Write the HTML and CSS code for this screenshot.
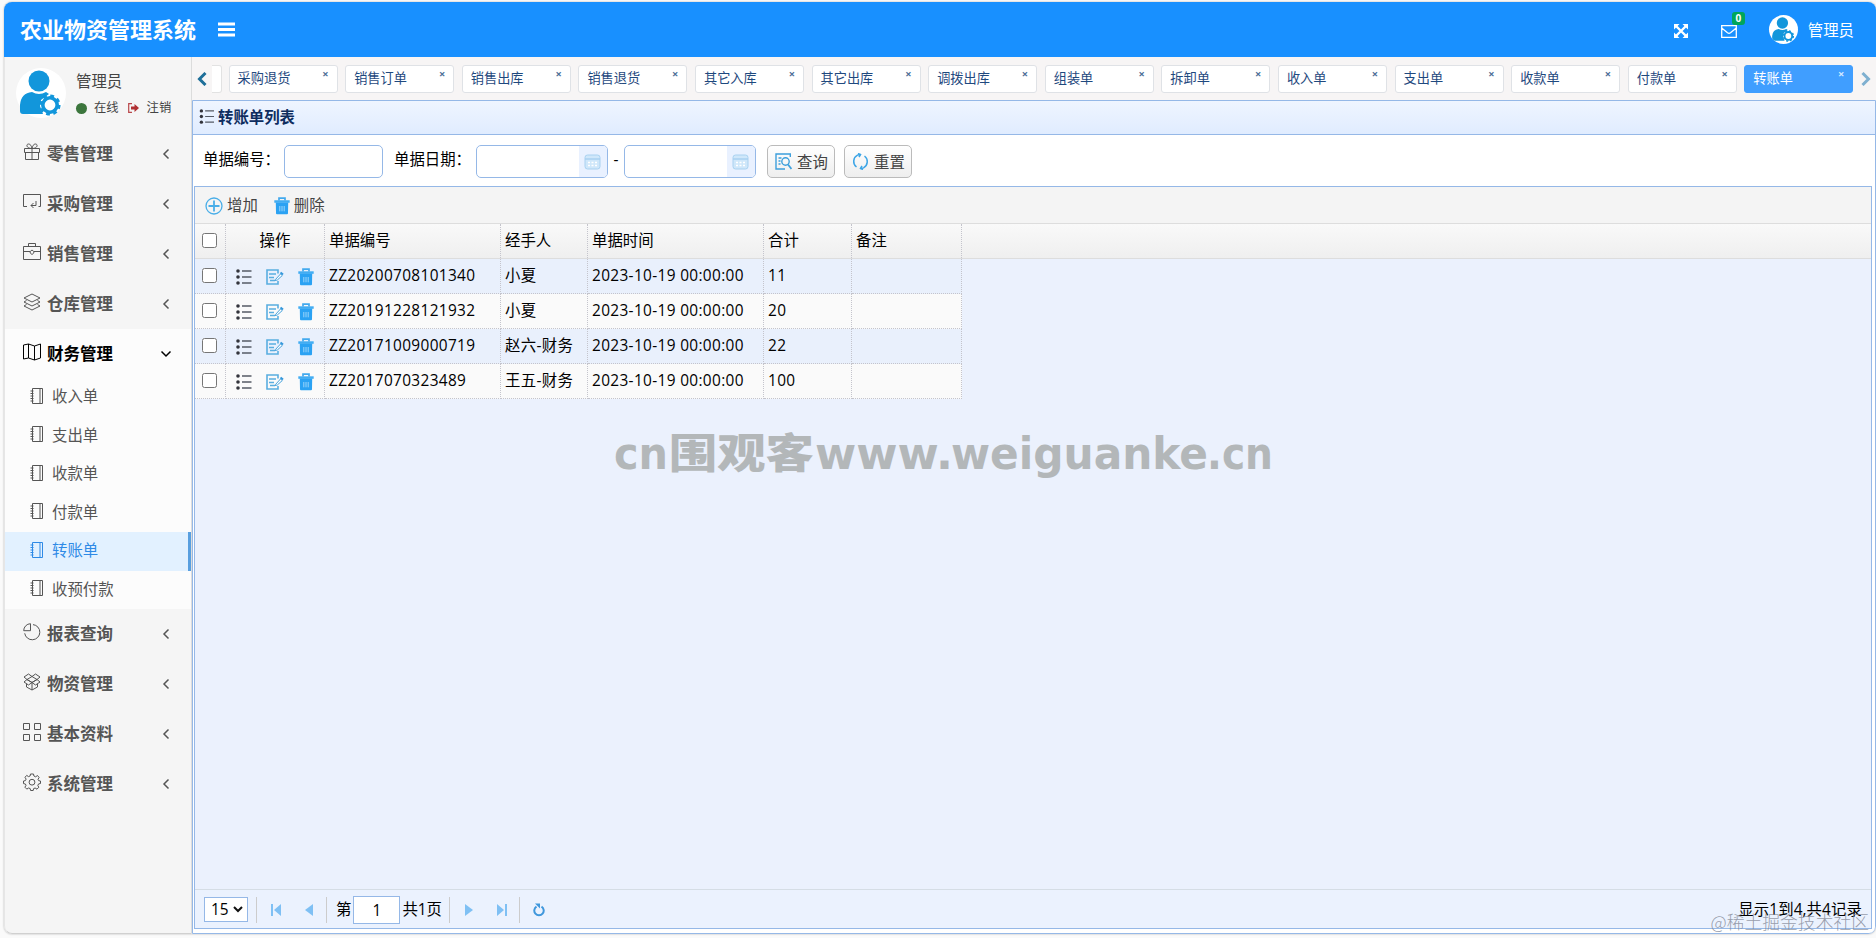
FILE: index.html
```html
<!DOCTYPE html>
<html lang="zh-CN">
<head>
    <meta charset="UTF-8">
    <title>农业物资管理系统</title>
    <link rel="stylesheet" href="styles.css">
</head>
<body>
    <!-- Icon definitions -->
    <svg class="icon-defs" width="0" height="0">
        <symbol id="i-user" viewBox="0 0 50 50">
            <circle cx="23" cy="13" r="10.5" fill="#1296db"/>
            <path d="M4 43V37Q5 25 16 24Q23 28 30 24L33 26L25 32L24 38L27 46H7Q4 46 4 43Z" fill="#1296db"/>
            <circle cx="34" cy="37" r="7.2" fill="#fff" stroke="#1296db" stroke-width="3.6"/>
            <circle cx="34" cy="37" r="9.3" fill="none" stroke="#1296db" stroke-width="2.6" stroke-dasharray="3.8 3.5"/>
        </symbol>
        <symbol id="i-gift" viewBox="0 0 18 18"><path d="M1.5 5.5h15v4h-15zM2.5 9.5v7h13v-7M9 5.5v11M9 5.500C3 5.500 3 1 5.500 1C7.500 1 8.500 3 9 5.500C9.500 3 10.500 1 12.500 1C15 1 15 5.500 9 5.500"/></symbol>
        <symbol id="i-purchase" viewBox="0 0 18 18"><path d="M4 13.500H.5V1.500h17v12h-2M13 8v4.500H8M10.500 10L8 12.500L10.500 15"/></symbol>
        <symbol id="i-case" viewBox="0 0 18 18"><path d="M.5 3.500h17v13H.5zM5.500 3.500v-3h7v3M.5 8.500h6.500M11 8.500h6.500M9 7l1.800 1.500v1.500L9 11.500L7.200 10V8.500z"/></symbol>
        <symbol id="i-layers" viewBox="0 0 18 18"><path d="M9 1l8 4-8 4-8-4zM3.500 7.500L1 9l8 4 8-4-2.500-1.500M3.500 11.500L1 13l8 4 8-4-2.500-1.500"/></symbol>
        <symbol id="i-map" viewBox="0 0 18 18"><path d="M.5 2l5-1 6 2 6-2v14l-6 2-6-2-5 1zM5.500 1v14M11.500 3v14"/></symbol>
        <symbol id="i-book" viewBox="0 0 14 16"><path d="M2.500.5h10v15h-10zM10 .5v15M.5 3h3M.5 5.500h3M.5 8h3M.5 10.500h3M.5 13h3"/></symbol>
        <symbol id="i-pie" viewBox="0 0 18 18"><path d="M7.500.7v7H.7A7 7 0 0 1 7.500.7zM10 1.600a7.600 7.600 0 1 1-8.300 8.700"/></symbol>
        <symbol id="i-box" viewBox="0 0 18 18"><path d="M5.500 1L1 4l3 2.500L9 3.500zM12.500 1L17 4l-3 2.500L9 3.500zM4 6.500L1 9l4.500 3L9 9.500zM14 6.500L17 9l-4.500 3L9 9.500zM4 6.500l5 3 5-3M3.500 11v3L9 17l5.500-3v-3M9 9.500V17"/></symbol>
        <symbol id="i-grid" viewBox="0 0 18 18"><path d="M.5.5h6v6h-6zM11.500.5h6v6h-6zM.5 11.500h6v6h-6zM11.500 11.500h6v6h-6z"/></symbol>
        <symbol id="i-gear" viewBox="0 0 18 18"><path d="M7.500 1h3l.4 2 1.700.8L14.500 2.500l1.600 2L15 6.300l.7 1.400 1.800.3v2.500l-1.900.4-.8 1.600 1 1.700-1.800 2-1.900-1.200-1.500.6-.4 1.900H7.600l-.4-1.900-1.600-.6-1.800 1.100-1.900-1.900 1.100-1.800L2.400 11 .5 10.600V8l1.900-.4.7-1.500L2 4.300l1.700-1.900 1.800 1.200L7.100 3z"/><circle cx="9" cy="9.200" r="2.900"/></symbol>
        <symbol id="i-left" viewBox="0 0 8 12"><path d="M6.500 1.500L2 6l4.500 4.500"/></symbol>
        <symbol id="i-down" viewBox="0 0 12 8"><path d="M1.500 1.500L6 6l4.500-4.500"/></symbol>
        <symbol id="i-list" viewBox="0 0 16 16"><path d="M6 2h9.500M6 8h9.500M6 14h9.500" stroke="#555b66" stroke-width="1.300"/><g fill="#33343c"><circle cx="2" cy="2" r="1.800"/><circle cx="2" cy="8" r="1.800"/><circle cx="2" cy="14" r="1.800"/></g></symbol>
        <symbol id="i-edit" viewBox="0 0 18 16"><path d="M12 4.500V1H1v14h11v-3M3 5h7M3 8.500h5M9 11.500H4" stroke="#5aaee0" fill="none" stroke-width="1.600"/><path d="M9.500 10.500l5-5.500 1.800 1.500-5 4.500-2.300.5z" fill="#fff" stroke="#48a3dc"/><path d="M14.500 3.500l2.500 2" stroke="#3498db" stroke-width="2"/></symbol>
        <symbol id="i-trash" viewBox="0 0 16 18"><path d="M5 3.500V1.200h6v2.300" fill="none" stroke="#42a9ee" stroke-width="1.700"/><path d="M.3 3.300h15.400v2.500H.3z" fill="#42adf2"/><path d="M1.800 5.500h12.400L14 16.200q0 1-1 1H3q-1 0-1-1z" fill="#2ba2f3"/><path d="M5.800 9v5.300M8 9v5.300M10.200 9v5.300" stroke="#9bd5fb" stroke-width="1"/></symbol>
        <symbol id="i-cal" viewBox="0 0 17 16"><rect x="1" y="1" width="15" height="14" rx="2.500" fill="#cfe7fa" stroke="#a9d1f0"/><path d="M1 5h15" stroke="#a9d1f0" stroke-width="1.500"/><path d="M4 8.500h9M4 11.500h9" stroke="#fff" stroke-width="1.500" stroke-dasharray="2 1.500"/></symbol>
    </svg>

    <div class="app">
        <div class="header">
            <h1>农业物资管理系统</h1>
            <svg class="burger" width="17" height="15" viewBox="0 0 17 15"><path d="M0 2h17M0 7.500h17M0 13h17" stroke="#fff" stroke-width="3"/></svg>
            <div class="header-right">
                <svg class="expand" width="14" height="14" viewBox="0 0 14 14"><path d="M0 0h5.500L0 5.500zM14 0v5.500L8.500 0zM0 14V8.500L5.500 14zM14 14H8.500L14 8.500z" fill="#fff"/><path d="M2 2l10 10M12 2L2 12" stroke="#fff" stroke-width="2.400"/></svg>
                <div class="mail">
                    <svg width="16" height="13" viewBox="0 0 16 13"><path d="M.7.700h14.600v11.600H.700zM.700 3l5.800 4.800q1.500 1 3 0L15.300 3" fill="none" stroke="#fff" stroke-width="1.300"/></svg>
                    <span class="badge">0</span>
                </div>
                <span class="avatar"><svg width="27" height="27"><use href="#i-user"/></svg></span>
                <span class="user-name">管理员</span>
            </div>
        </div>

        <div class="body">
            <!-- Sidebar -->
            <div class="sidebar">
                <div class="user-panel">
                    <span class="photo"><svg width="50" height="50"><use href="#i-user"/></svg></span>
                    <div class="user-info">
                        <div class="user-title">管理员</div>
                        <div class="user-status">
                            <span class="dot"></span><span>在线</span>
                            <svg width="11" height="10" viewBox="0 0 11 10"><path d="M4 .7H.7v8.600H4" fill="none" stroke="#b9474a" stroke-width="1.200"/><path d="M3 3.500h3.500V1L11 5 6.500 9V6.500H3z" fill="#b03033"/></svg>
                            <span>注销</span>
                        </div>
                    </div>
                </div>
                <div class="menu">
                    <div class="menu-item"><svg class="line"><use href="#i-gift"/></svg><span>零售管理</span><svg class="arrow"><use href="#i-left"/></svg></div>
                    <div class="menu-item"><svg class="line"><use href="#i-purchase"/></svg><span>采购管理</span><svg class="arrow"><use href="#i-left"/></svg></div>
                    <div class="menu-item"><svg class="line"><use href="#i-case"/></svg><span>销售管理</span><svg class="arrow"><use href="#i-left"/></svg></div>
                    <div class="menu-item"><svg class="line"><use href="#i-layers"/></svg><span>仓库管理</span><svg class="arrow"><use href="#i-left"/></svg></div>
                    <div class="menu-item open"><svg class="line"><use href="#i-map"/></svg><span>财务管理</span><svg class="arrow"><use href="#i-down"/></svg></div>
                    <div class="submenu">
                        <div class="sub-item"><svg class="line"><use href="#i-book"/></svg><span>收入单</span></div>
                        <div class="sub-item"><svg class="line"><use href="#i-book"/></svg><span>支出单</span></div>
                        <div class="sub-item"><svg class="line"><use href="#i-book"/></svg><span>收款单</span></div>
                        <div class="sub-item"><svg class="line"><use href="#i-book"/></svg><span>付款单</span></div>
                        <div class="sub-item active"><svg class="line"><use href="#i-book"/></svg><span>转账单</span></div>
                        <div class="sub-item"><svg class="line"><use href="#i-book"/></svg><span>收预付款</span></div>
                    </div>
                    <div class="menu-item"><svg class="line"><use href="#i-pie"/></svg><span>报表查询</span><svg class="arrow"><use href="#i-left"/></svg></div>
                    <div class="menu-item"><svg class="line"><use href="#i-box"/></svg><span>物资管理</span><svg class="arrow"><use href="#i-left"/></svg></div>
                    <div class="menu-item"><svg class="line"><use href="#i-grid"/></svg><span>基本资料</span><svg class="arrow"><use href="#i-left"/></svg></div>
                    <div class="menu-item"><svg class="line"><use href="#i-gear"/></svg><span>系统管理</span><svg class="arrow"><use href="#i-left"/></svg></div>
                </div>
            </div>

            <div class="main">
                <!-- Page tabs -->
                <div class="tabs">
                    <div class="tab-prev"><svg width="10" height="14" viewBox="0 0 10 14"><path d="M8.500 1L2.500 7l6 6" fill="none" stroke="#1f6f99" stroke-width="3"/></svg></div>
                    <div class="tab-cut"></div>
                    <div class="tab">采购退货<i>×</i></div>
                    <div class="tab">销售订单<i>×</i></div>
                    <div class="tab">销售出库<i>×</i></div>
                    <div class="tab">销售退货<i>×</i></div>
                    <div class="tab">其它入库<i>×</i></div>
                    <div class="tab">其它出库<i>×</i></div>
                    <div class="tab">调拨出库<i>×</i></div>
                    <div class="tab">组装单<i>×</i></div>
                    <div class="tab">拆卸单<i>×</i></div>
                    <div class="tab">收入单<i>×</i></div>
                    <div class="tab">支出单<i>×</i></div>
                    <div class="tab">收款单<i>×</i></div>
                    <div class="tab">付款单<i>×</i></div>
                    <div class="tab active">转账单<i>×</i></div>
                    <div class="tab-next"><svg width="10" height="14" viewBox="0 0 10 14"><path d="M1.500 1l6 6-6 6" fill="none" stroke="#7fb0d0" stroke-width="3"/></svg></div>
                </div>

                <div class="panel">
                    <div class="panel-title"><svg width="16" height="15"><use href="#i-list"/></svg><span>转账单列表</span></div>
                    <div class="search">
                        <label class="label-no">单据编号：</label>
                        <div class="field field-no"></div>
                        <label class="label-date">单据日期：</label>
                        <div class="field field-date"><span><svg width="17" height="16"><use href="#i-cal"/></svg></span></div>
                        <span class="dash">-</span>
                        <div class="field field-date"><span><svg width="17" height="16"><use href="#i-cal"/></svg></span></div>
                        <button class="btn btn-search"><svg width="17" height="17" viewBox="0 0 17 17" fill="none" stroke="#3d9fdc" stroke-width="1.400"><path d="M15.300 4V1H1v15h9M3.500 5h3M3.500 8h2M3.500 11h2M1 1v15"/><circle cx="10.500" cy="8.500" r="3.700"/><path d="M13 11.500l3.500 4.500" stroke-width="1.800"/></svg>查询</button>
                        <button class="btn"><svg width="17" height="17" viewBox="0 0 17 17" fill="none" stroke="#3da5e6" stroke-width="1.500"><path d="M5.500 2.200a7 7 0 0 0-1 11.800M11.500 14.800a7 7 0 0 0 1-11.800M8.500 1.500a7 7 0 0 0-3 .7M8.500 15.500a7 7 0 0 0 3-.7"/><path d="M6 .5l2.500 1L7 4M11 16.500l-2.500-1L10 13"/></svg>重置</button>
                    </div>

                    <div class="datagrid">
                        <div class="toolbar">
                            <svg width="18" height="18" viewBox="0 0 18 18" fill="none" stroke="#4aaee8" stroke-width="1.300"><circle cx="9" cy="9" r="8"/><path d="M9 3.500v11M3.500 9h11" stroke-width="1.800"/></svg><span class="add">增加</span>
                            <svg width="16" height="18"><use href="#i-trash"/></svg><span>删除</span>
                        </div>
                        <div class="row head">
                            <div><input type="checkbox"></div>
                            <div class="ops-title">操作</div>
                            <div>单据编号</div>
                            <div>经手人</div>
                            <div>单据时间</div>
                            <div>合计</div>
                            <div>备注</div>
                        </div>
                        <div class="row blue">
                            <div><input type="checkbox"></div>
                            <div class="ops"><svg width="16" height="16"><use href="#i-list"/></svg><svg width="18" height="16"><use href="#i-edit"/></svg><svg width="16" height="18"><use href="#i-trash"/></svg></div>
                            <div>ZZ20200708101340</div>
                            <div>小夏</div>
                            <div>2023-10-19 00:00:00</div>
                            <div>11</div>
                            <div></div>
                        </div>
                        <div class="row">
                            <div><input type="checkbox"></div>
                            <div class="ops"><svg width="16" height="16"><use href="#i-list"/></svg><svg width="18" height="16"><use href="#i-edit"/></svg><svg width="16" height="18"><use href="#i-trash"/></svg></div>
                            <div>ZZ20191228121932</div>
                            <div>小夏</div>
                            <div>2023-10-19 00:00:00</div>
                            <div>20</div>
                            <div></div>
                        </div>
                        <div class="row blue">
                            <div><input type="checkbox"></div>
                            <div class="ops"><svg width="16" height="16"><use href="#i-list"/></svg><svg width="18" height="16"><use href="#i-edit"/></svg><svg width="16" height="18"><use href="#i-trash"/></svg></div>
                            <div>ZZ20171009000719</div>
                            <div>赵六-财务</div>
                            <div>2023-10-19 00:00:00</div>
                            <div>22</div>
                            <div></div>
                        </div>
                        <div class="row">
                            <div><input type="checkbox"></div>
                            <div class="ops"><svg width="16" height="16"><use href="#i-list"/></svg><svg width="18" height="16"><use href="#i-edit"/></svg><svg width="16" height="18"><use href="#i-trash"/></svg></div>
                            <div>ZZ2017070323489</div>
                            <div>王五-财务</div>
                            <div>2023-10-19 00:00:00</div>
                            <div>100</div>
                            <div></div>
                        </div>
                        <div class="grid-space"></div>
                        <!-- Pager -->
                        <div class="pager">
                            <div class="page-size">15<svg width="10" height="7" viewBox="0 0 10 7"><path d="M1 1l4 4 4-4" fill="none" stroke="#111" stroke-width="2"/></svg></div>
                            <span class="sep"></span>
                            <svg class="first" width="10" height="12" viewBox="0 0 10 12"><path d="M0 0h2v12H0zM10 0v12L3 6z" fill="#7fc0f4"/></svg>
                            <svg class="prev" width="8" height="12" viewBox="0 0 8 12"><path d="M8 0v12L0 6z" fill="#7fc0f4"/></svg>
                            <span class="sep"></span>
                            <span class="page-text">第</span>
                            <div class="page-no">1</div>
                            <span>共1页</span>
                            <span class="sep sep-total"></span>
                            <svg class="next" width="8" height="12" viewBox="0 0 8 12"><path d="M0 0l8 6-8 6z" fill="#7fc0f4"/></svg>
                            <svg class="last" width="10" height="12" viewBox="0 0 10 12"><path d="M8 0h2v12H8zM0 0l7 6-7 6z" fill="#7fc0f4"/></svg>
                            <span class="sep"></span>
                            <svg class="reload" width="12" height="14" viewBox="0 0 12 14"><path d="M8.500 3.600a4.700 4.700 0 1 1-5 0" fill="none" stroke="#3f97dc" stroke-width="2"/><path d="M2 .5h5v5z" fill="#3f97dc"/></svg>
                            <span class="total">显示1到4,共4记录</span>
                        </div>
                    </div>
                </div>
            </div>
        </div>
    </div>

    <svg class="site-mark" width="680" height="70">
        <text x="9" y="44" font-size="45" textLength="54" lengthAdjust="spacingAndGlyphs">cn</text>
        <text class="cjk" x="-1" y="43" font-size="41" transform="translate(65 0) scale(1.180 1)">围观客</text>
        <text x="210" y="44" font-size="45" textLength="138" lengthAdjust="spacingAndGlyphs">www.</text>
        <text x="346" y="44" font-size="45" textLength="257" lengthAdjust="spacingAndGlyphs">weiguanke</text>
        <text x="602" y="44" font-size="45" textLength="66" lengthAdjust="spacingAndGlyphs">.cn</text>
    </svg>
    <div class="corner-mark">@稀土掘金技术社区</div>
</body>
</html>
```

FILE: styles.css
```css
* {
    box-sizing: border-box;
}

body {
    margin: 0;
    height: 938px;
    padding: 2px 0 4px 4px;
    overflow: hidden;
    position: relative;
    background-color: #fafafa;
    font-family: "Open Sans", "Noto Sans CJK SC", sans-serif;
    font-size: 15.4px;
    line-height: 20px;
    color: #000;
}

svg {
    display: block;
    flex: none;
}

.icon-defs {
    position: absolute;
}

.app {
    height: 932px;
    display: flex;
    flex-direction: column;
    border-radius: 8px;
    overflow: hidden;
    background-color: #f5f5f5;
    box-shadow: 0 0 2px #aaa;
}

/* Header */
.header {
    height: 55px;
    flex: none;
    display: flex;
    align-items: center;
    padding: 0 22px 0 16px;
    background-color: #1890ff;
    color: #fff;
}

.header h1 {
    margin: -2px 22px 0 0;
    font-size: 22px;
    line-height: 28px;
    font-weight: bold;
    white-space: nowrap;
}

.header-right {
    margin-left: auto;
    display: flex;
    align-items: center;
}

.expand {
    margin-top: 2px;
}

.mail {
    position: relative;
    margin: 3px 32px 0 33px;
}

.badge {
    position: absolute;
    left: 11px;
    top: -13px;
    width: 13px;
    height: 13px;
    border-radius: 3px;
    background-color: #00a65a;
    font-size: 10px;
    line-height: 12px;
    font-weight: bold;
    text-align: center;
}

.avatar {
    width: 29px;
    height: 29px;
    padding: 1px;
    border-radius: 50%;
    background-color: #fff;
    margin-right: 10px;
    overflow: hidden;
}

.user-name {
    margin-top: 2px;
}

.body {
    flex: 1;
    display: flex;
    min-height: 0;
}

/* Sidebar */
.sidebar {
    width: 188px;
    flex: none;
    border-left: 1px solid #e6e6e6;
    border-right: 1px solid #dcdcdc;
    border-bottom: 1px solid #d0d0d0;
    border-radius: 0 0 0 8px;
    background-color: #f5f5f5;
    color: #555;
}

.user-panel {
    height: 72px;
    display: flex;
    padding: 11px 0 0 11px;
}

.photo {
    width: 50px;
    height: 50px;
    border-radius: 50%;
    background-color: #fff;
}

.user-info {
    margin-left: 10px;
    color: #444;
}

.user-title {
    margin-top: 4px;
}

.user-status {
    display: flex;
    align-items: center;
    margin-top: 6px;
    font-size: 12.3px;
    white-space: nowrap;
}

.user-status svg {
    margin: 0 8px 0 9px;
}

.dot {
    width: 11px;
    height: 11px;
    border-radius: 50%;
    background-color: #3c763d;
    margin-right: 7px;
}

.line,
.arrow {
    fill: none;
    stroke: currentColor;
    stroke-width: 1;
}

.menu-item {
    height: 50px;
    display: flex;
    align-items: center;
    padding: 0 21px 0 18px;
    font-size: 16.5px;
    font-weight: bold;
}

.menu-item .line {
    width: 18px;
    height: 18px;
    margin: -4px 6px 0 0;
}

.menu-item .arrow {
    width: 8px;
    height: 12px;
    margin-left: auto;
    stroke-width: 1.5;
}

.menu-item.open {
    height: 49px;
    padding-right: 19px;
    background-color: #fcfcfc;
    color: #000;
}

.menu-item.open .arrow {
    width: 12px;
    height: 8px;
}

.submenu {
    background-color: #fcfcfc;
}

.sub-item {
    height: 38.5px;
    display: flex;
    align-items: center;
    padding-left: 25px;
}

.sub-item .line {
    width: 14px;
    height: 16px;
    margin: -3px 8px 0 0;
}

.sub-item.active {
    background-color: #e2f1ff;
    border-right: 3px solid #589fdf;
    color: #2e8ae6;
}

.main {
    flex: 1;
    min-width: 0;
    display: flex;
    flex-direction: column;
}

/* Tabs */
.tabs {
    height: 43px;
    flex: none;
    display: flex;
    align-items: center;
    background-color: #f7f5f5;
}

.tab-prev {
    width: 20px;
    padding-left: 5px;
}

.tab-cut {
    width: 10px;
    height: 28px;
    margin-right: 6.6px;
    border: 1px solid #e2e2e2;
    border-left: none;
    border-radius: 0 3px 3px 0;
    background-color: #fff;
}

.tab {
    position: relative;
    width: 109px;
    height: 28px;
    flex: none;
    margin-right: 7.6px;
    padding-left: 8px;
    border: 1px solid #dfe2e6;
    border-radius: 3px;
    background-color: #fff;
    color: #1f497e;
    font-size: 13.2px;
    line-height: 25px;
}

.tab i {
    position: absolute;
    right: 8px;
    top: 0;
    font-style: normal;
    font-size: 11px;
    font-weight: bold;
    line-height: 16px;
    color: #4b6d96;
}

.tab.active {
    border-color: #409eff;
    background-color: #409eff;
    color: #fff;
}

.tab.active i {
    color: #d4e9ff;
}

/* Panel */
.panel {
    flex: 1;
    display: flex;
    flex-direction: column;
    border: 1px solid #95b8e7;
    border-radius: 0 0 7px 0;
    background-color: #fff;
}

.panel-title {
    height: 34px;
    flex: none;
    display: flex;
    align-items: center;
    padding: 1px 0 0 6px;
    border-bottom: 1px solid #95b8e7;
    background: linear-gradient(#eff5ff, #e0ecff);
    color: #0e2d5f;
    font-weight: bold;
}

.panel-title svg {
    margin: -4px 3px 0 0;
}

.search {
    height: 51px;
    flex: none;
    display: flex;
    align-items: center;
    padding: 2px 0 0 10px;
}

.search label {
    margin-top: -3px;
    white-space: nowrap;
}

.label-no {
    width: 81px;
}

.label-date {
    width: 82px;
    margin-left: 11px;
}

.field {
    height: 33px;
    border: 1px solid #95b8e7;
    border-radius: 5px;
    overflow: hidden;
    background-color: #fff;
}

.field-no {
    width: 99px;
}

.field-date {
    width: 132px;
    display: flex;
    justify-content: flex-end;
}

.field-date span {
    width: 28px;
    padding: 8px 0 0 5px;
    background-color: #e9f1ff;
}

.dash {
    width: 16px;
    text-align: center;
    margin-top: -4px;
}

.btn {
    width: 68px;
    height: 33px;
    display: flex;
    align-items: center;
    gap: 5px;
    padding: 0 0 0 7px;
    border: 1px solid #bbb;
    border-radius: 5px;
    background: linear-gradient(#fff, #eee);
    color: #444;
    font-family: inherit;
    font-size: 15.4px;
    white-space: nowrap;
}

.btn-search {
    margin: 0 9px 0 11px;
}

/* Data grid */
.datagrid {
    flex: 1;
    display: flex;
    flex-direction: column;
    margin: 0 3px 4px 1px;
    border: 1px solid #95b8e7;
    background-color: #ebf1fd;
}

.toolbar {
    height: 37px;
    flex: none;
    display: flex;
    align-items: center;
    padding: 1px 0 0 10px;
    border-bottom: 1px solid #ddd;
    background-color: #f4f4f4;
    color: #444;
}

.toolbar span {
    margin-left: 4px;
}

.toolbar .add {
    margin-right: 16px;
}

.row {
    height: 35.1px;
    flex: none;
    display: grid;
    grid-template-columns: 31px 99px 176px 87px 176px 88px 110px;
    width: 767px;
    background-color: #fafafa;
}

.row > div {
    display: flex;
    align-items: center;
    padding-left: 4px;
    border-right: 1px dotted #c4c4cc;
    border-bottom: 1px dotted #c4c4cc;
    white-space: nowrap;
    letter-spacing: 0.35px;
}

.row.blue {
    background-color: #e9f0fc;
}

.row.head {
    width: auto;
    border-bottom: 1px solid #ddd;
    background: linear-gradient(#f9f9f9, #efefef);
}

.row.head > div {
    border-bottom: none;
    letter-spacing: 0;
}

.row .ops-title {
    justify-content: center;
    padding: 0;
}

.row .ops {
    padding: 2px 0 0 10px;
}

.ops svg + svg {
    margin-left: 14px;
}

.row input {
    width: 15px;
    height: 15px;
    margin: -1px 0 0 3px;
}

.grid-space {
    flex: 1;
}

.pager {
    height: 39px;
    flex: none;
    display: flex;
    align-items: center;
    padding: 1px 9px 0 9px;
    border-top: 1px solid #d5dde5;
    background-color: #ebf2fe;
}

.page-size {
    width: 44px;
    height: 25px;
    display: flex;
    align-items: center;
    justify-content: space-between;
    padding: 0 4px 0 6px;
    margin-right: 8px;
    border: 1px solid #95b8e7;
    background-color: #fff;
}

.sep {
    width: 1px;
    height: 26px;
    background-color: #ccc;
}

.first {
    margin: 0 24px 0 14px;
}

.prev {
    margin-right: 13px;
}

.page-text {
    margin-left: 9px;
}

.page-no {
    width: 47px;
    height: 28px;
    margin: 0 2px;
    border: 1px solid #95b8e7;
    background-color: #fff;
    line-height: 27px;
    text-align: center;
}

.sep-total {
    margin-left: 7px;
}

.next {
    margin: 0 24px 0 15px;
}

.last {
    margin-right: 12px;
}

.reload {
    margin-left: 13px;
}

.total {
    margin-left: auto;
    letter-spacing: 0.1px;
}

/* Watermarks */
.site-mark {
    position: absolute;
    left: 605px;
    top: 425px;
    fill: #b3b7b9;
    font-family: "DejaVu Sans", sans-serif;
    font-weight: bold;
}

.site-mark .cjk {
    font-family: "Noto Sans CJK SC", sans-serif;
    font-weight: 900;
}

.corner-mark {
    position: absolute;
    right: 7px;
    bottom: 5px;
    font-family: "Noto Sans CJK SC", sans-serif;
    font-size: 17.8px;
    font-weight: 300;
    line-height: 24px;
    color: rgba(130, 135, 150, 0.8);
}
```
